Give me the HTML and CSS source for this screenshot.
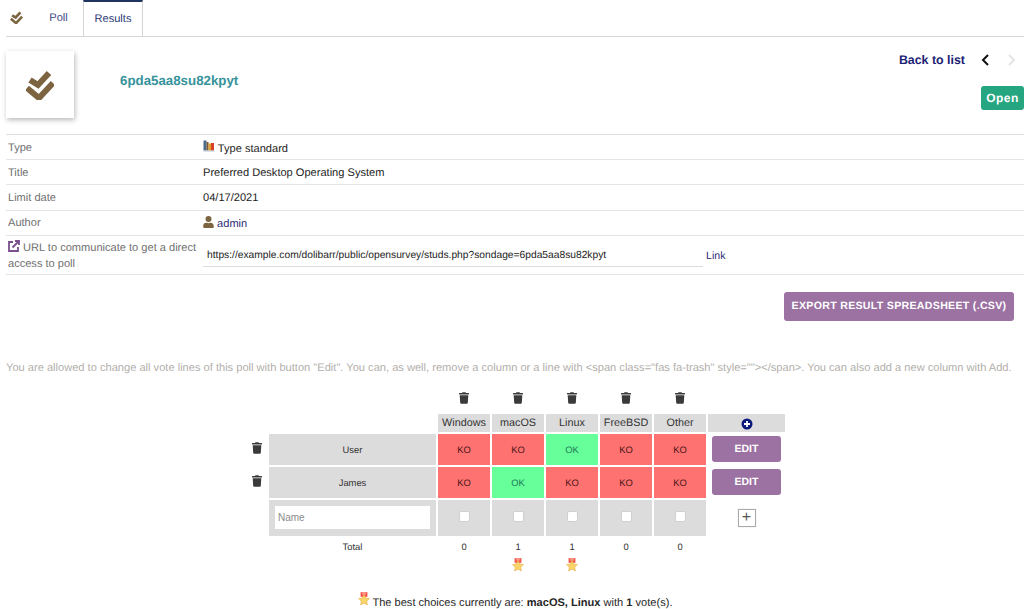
FILE: index.html
```html
<!DOCTYPE html>
<html lang="en">
<head>
<meta charset="utf-8">
<title>Poll results</title>
<link rel="stylesheet" href="styles.css">
</head>
<body>
<nav class="tabs">
  <span class="tab-icon"><svg width="13" height="13" viewBox="0 0 28 30"><path class="check" d="M1 18l12 10 14-15M4 10l8 5L23 3"/></svg></span>
  <a class="tab poll">Poll</a>
  <a class="tab active">Results</a>
</nav>
<header class="banner">
  <div class="logo"><svg width="28" height="30" viewBox="0 0 28 30"><path class="check" d="M1 18l12 10 14-15M4 10l8 5L23 3"/></svg></div>
  <div class="ref">6pda5aa8su82kpyt</div>
  <div class="nav-side">
    <div class="nav-line">
      <a class="back">Back to list</a>
      <svg class="chev" width="9" height="12" viewBox="0 0 9 12"><path d="M7 1L2 6l5 5"/></svg>
      <svg class="chev off" width="9" height="12" viewBox="0 0 9 12"><path d="M2 1l5 5-5 5"/></svg>
    </div>
    <span class="status">Open</span>
  </div>
</header>
<table class="info">
  <tr><td class="lbl">Type</td><td class="val"><svg class="ico-type" width="12" height="13" viewBox="0 0 12 13"><rect x="0.5" y="0.5" width="3" height="10" fill="#4a6a8c"/><rect x="3.5" y="2" width="2" height="8.5" fill="#7a5a3a"/><rect x="5.5" y="3.5" width="2.5" height="7" fill="#e0a030"/><rect x="8" y="3" width="3" height="7.5" fill="#d8402a"/><rect x="0.5" y="10.5" width="11" height="1" fill="#b8c4d0"/></svg> Type standard</td></tr>
  <tr><td class="lbl">Title</td><td class="val">Preferred Desktop Operating System</td></tr>
  <tr><td class="lbl">Limit date</td><td class="val">04/17/2021</td></tr>
  <tr><td class="lbl">Author</td><td class="val"><svg class="ico-user" width="11" height="12" viewBox="0 0 448 512"><path d="M224 256a128 128 0 1 0 0-256 128 128 0 0 0 0 256zm90 32h-17a174 174 0 0 1-146 0h-17A134 134 0 0 0 0 422v42c0 26 22 48 48 48h352c26 0 48-22 48-48v-42c0-74-60-134-134-134z"/></svg> <a class="user">admin</a></td></tr>
  <tr><td class="lbl url-lbl"><svg class="ico-ext" width="12" height="12" viewBox="0 0 12 12"><path d="M5 2H1v9h9V7"/><path d="M4.5 7.5L10.5 1.5M7 1h4v4"/></svg> URL to communicate to get a direct access to poll</td><td class="val"><div class="url-row"><span class="url-box">https://example.com/dolibarr/public/opensurvey/studs.php?sondage=6pda5aa8su82kpyt</span><a class="user link">Link</a></div></td></tr>
</table>
<div class="export-row"><a class="btn export">Export result spreadsheet (.CSV)</a></div>
<p class="hint">You are allowed to change all vote lines of this poll with button "Edit". You can, as well, remove a column or a line with &lt;span class="fas fa-trash" style=""&gt;&lt;/span&gt;. You can also add a new column with Add.</p>
<table class="votes">
  <tr class="del-row">
    <td></td><td></td>
    <td><svg class="trash" viewBox="0 0 448 512"><use href="#t"/></svg></td>
    <td><svg class="trash" viewBox="0 0 448 512"><use href="#t"/></svg></td>
    <td><svg class="trash" viewBox="0 0 448 512"><use href="#t"/></svg></td>
    <td><svg class="trash" viewBox="0 0 448 512"><use href="#t"/></svg></td>
    <td><svg class="trash" viewBox="0 0 448 512"><use href="#t"/></svg></td>
    <td></td>
  </tr>
  <tr class="head-row">
    <td></td><td></td>
    <th>Windows</th><th>macOS</th><th>Linux</th><th>FreeBSD</th><th>Other</th>
    <th class="add-col"><svg width="12" height="12" viewBox="0 0 12 12"><circle cx="6" cy="6" r="5.5" fill="#0a1a7c"/><path d="M6 3v6M3 6h6" stroke="#fff" stroke-width="1.8"/></svg></th>
  </tr>
  <tr class="vote-row">
    <td class="del"><svg class="trash" viewBox="0 0 448 512"><use href="#t"/></svg></td>
    <td class="name">User</td>
    <td class="ko">KO</td><td class="ko">KO</td><td class="ok">OK</td><td class="ko">KO</td><td class="ko">KO</td>
    <td class="act"><a class="btn edit">Edit</a></td>
  </tr>
  <tr class="vote-row">
    <td class="del"><svg class="trash" viewBox="0 0 448 512"><use href="#t"/></svg></td>
    <td class="name">James</td>
    <td class="ko">KO</td><td class="ok">OK</td><td class="ko">KO</td><td class="ko">KO</td><td class="ko">KO</td>
    <td class="act"><a class="btn edit">Edit</a></td>
  </tr>
  <tr class="new-row">
    <td></td>
    <td class="name"><input class="name-input" type="text" placeholder="Name"></td>
    <td class="chk"><input type="checkbox"></td><td class="chk"><input type="checkbox"></td><td class="chk"><input type="checkbox"></td><td class="chk"><input type="checkbox"></td><td class="chk"><input type="checkbox"></td>
    <td class="act"><span class="plus-box">+</span></td>
  </tr>
  <tr class="total-row">
    <td></td><td class="total-lbl">Total</td>
    <td>0</td><td>1</td><td>1</td><td>0</td><td>0</td><td></td>
  </tr>
  <tr class="medal-row">
    <td></td><td></td><td></td>
    <td><svg class="medal" viewBox="0 0 14 16"><use href="#m"/></svg></td>
    <td><svg class="medal" viewBox="0 0 14 16"><use href="#m"/></svg></td>
    <td></td><td></td><td></td>
  </tr>
</table>
<p class="best"><svg class="medal" viewBox="0 0 14 16"><use href="#m"/></svg> The best choices currently are: <b>macOS, Linux</b> with <b>1</b> vote(s).</p>
<svg class="defs" width="0" height="0">
  <defs>
    <g id="t"><path fill="#3a3a3a" d="M432 32H312l-9-19A24 24 0 0 0 281 0H167a24 24 0 0 0-22 13l-9 19H16A16 16 0 0 0 0 48v32a16 16 0 0 0 16 16h416a16 16 0 0 0 16-16V48a16 16 0 0 0-16-16zM53 467a48 48 0 0 0 48 45h246a48 48 0 0 0 48-45l21-339H32z"/></g>
    <g id="m"><path fill="#f2574c" d="M3 0h8v5.5H3z"/><path fill="#ff9a8a" d="M5 0h4v3H5z"/><path fill="#f9d468" stroke="#e8a848" stroke-width=".6" d="M7 2.8l2 4 4.4.7-3.2 3.1.8 4.4-4-2.1-4 2.1.8-4.4L.6 7.5 5 6.8z"/></g>
  </defs>
</svg>
</body>
</html>
```
FILE: styles.css
```css
* { box-sizing: border-box; }
html, body { margin: 0; padding: 0; height: 609px; overflow: hidden; background: #fff; }
body { font-family: "Liberation Sans", Arial, sans-serif; font-size: 11.07px; color: #262626; text-rendering: geometricPrecision; }
a { color: #1f2a6e; text-decoration: none; }
.check { fill: none; stroke: #7d6440; stroke-width: 6; stroke-linecap: butt; stroke-linejoin: miter; }

.tabs { display: flex; align-items: stretch; height: 37px; margin-left: 6px; border-bottom: 1px solid #d6d6d6; }
.tab-icon { display: flex; align-items: center; width: 34px; padding-left: 4px; padding-bottom: 1px; }
.tab { display: flex; align-items: center; justify-content: center; font-size: 11.07px; color: #3f4a8a; padding-bottom: 1px; }
.poll { width: 43px; padding-right: 6px; }
.tab.active { width: 60px; color: #2b3a75; border-top: 2px solid #1f3560; border-left: 1px solid #d6d6d6; border-right: 1px solid #d6d6d6; }

.banner { display: flex; align-items: flex-start; margin: 14px 0 0 6px; height: 83px; }
.logo { width: 68px; height: 67px; display: flex; align-items: center; justify-content: center; background: #fff; box-shadow: 1px 2px 5px rgba(0,0,0,.28); }
.ref { margin: 22px 0 0 46px; font-size: 13.3px; font-weight: 700; color: #36939b; }
.nav-side { margin-left: auto; display: flex; flex-direction: column; align-items: flex-end; }
.nav-line { display: flex; align-items: center; height: 17px; padding-right: 8px; }
.back { font-size: 12.4px; font-weight: 700; color: #1b2273; }
.chev { margin-left: 16px; fill: none; stroke: #111; stroke-width: 2; }
.chev.off { margin-left: 17px; stroke: #e4e4e4; }
.status { margin-top: 18px; width: 43px; height: 24px; background: #25a580; color: #fff; font-size: 12px; font-weight: 700; letter-spacing: .4px; border-radius: 3px; display: flex; align-items: center; justify-content: center; }

.info { margin-left: 6px; width: 1018px; border-collapse: collapse; border-top: 1px solid #dedede; }
.info td { border-bottom: 1px solid #e4e4e4; padding: 1px 2px 0; height: 25.2px; font-size: 11.07px; vertical-align: middle; }
.lbl { width: 197px; color: #6f6f6f; }
.info .url-lbl { line-height: 16px; height: 39px; padding-top: 2px; }
.info .val { padding-left: 0; color: #1c1c1c; }
.ico-type, .ico-user { vertical-align: -1px; }
.ico-user { fill: #7d6440; }
.user { color: #2d2a76; }
.ico-ext { fill: none; stroke: #7a4f8c; stroke-width: 1.8; vertical-align: -1px; }
.url-row { display: flex; align-items: center; padding-top: 2px; }
.url-box { width: 500px; padding: 0 4px; height: 22px; line-height: 22px; border-bottom: 1px solid #dcdcdc; font-size: 10.26px; }
.link { margin-left: 3px; font-size: 10.6px; }

.export-row { display: flex; justify-content: flex-end; padding: 17px 10px 0 0; }
.btn { display: inline-flex; align-items: center; justify-content: center; background: #9c72a3; color: #fff; font-weight: 700; text-transform: uppercase; border-radius: 3px; white-space: nowrap; }
.export { width: 230px; height: 29px; font-size: 10.6px; letter-spacing: .3px; }

.hint { margin: 40px 0 0 6px; font-size: 11.1px; line-height: 14px; color: #b2afab; white-space: nowrap; }

.votes { margin: 10px 0 0 241px; border-collapse: separate; border-spacing: 2px; table-layout: fixed; width: 546px; font-size: 9.4px; }
.votes td, .votes th { padding: 0; text-align: center; }
.votes td { width: 52px; }
.votes td:nth-child(1) { width: 24px; }
.votes td:nth-child(2) { width: 167px; }
.votes td:nth-child(8) { width: 77px; }
.trash { width: 10px; height: 12px; display: block; margin: 0 auto; }
.del-row td { height: 25px; vertical-align: top; padding-top: 5px; }
.head-row th { height: 18px; background: #dcdcdc; font-size: 10.8px; font-weight: 400; color: #333; }
.head-row .add-col svg { display: block; margin: 3px auto 0; }
.vote-row td { height: 31px; }
.vote-row .del { vertical-align: top; padding: 8px 0 0 3px; }
.name { background: #dcdcdc; color: #333; }
.ko { background: #ff7272; color: #4a1414; }
.ok { background: #66ff99; color: #1f7a5a; }
.edit { width: 69px; height: 26px; font-size: 10.5px; }
.new-row td { height: 36px; }
.new-row .name { padding: 0 6px; }
.name-input { width: 155px; height: 23px; display: block; border: 0; background: #fff; padding: 0 3px; font: 10px "Liberation Sans", Arial, sans-serif; }
.name-input::placeholder { color: #8a8a8a; }
.votes .chk { background: #dcdcdc; padding-bottom: 3px; }
.chk input { appearance: none; width: 11px; height: 11px; margin: 0; vertical-align: middle; background: #fff; border: 1px solid #d0d0d0; border-radius: 2px; }
.plus-box { display: inline-flex; width: 18px; height: 18px; align-items: center; justify-content: center; border: 1px solid #aaa; font-size: 16px; color: #555; line-height: 1; box-shadow: 0 0 1px #ccc; }
.total-row td { height: 18px; color: #333; font-size: 9.4px; }
.medal-row td { height: 16px; vertical-align: top; }
.medal { width: 12px; height: 14px; display: block; margin: 0 auto; }

.best { margin: 16px 0 0 6px; text-align: center; font-size: 11.07px; color: #262626; white-space: nowrap; }
.best .medal { display: inline-block; vertical-align: 0; }
.defs { position: absolute; }
```
